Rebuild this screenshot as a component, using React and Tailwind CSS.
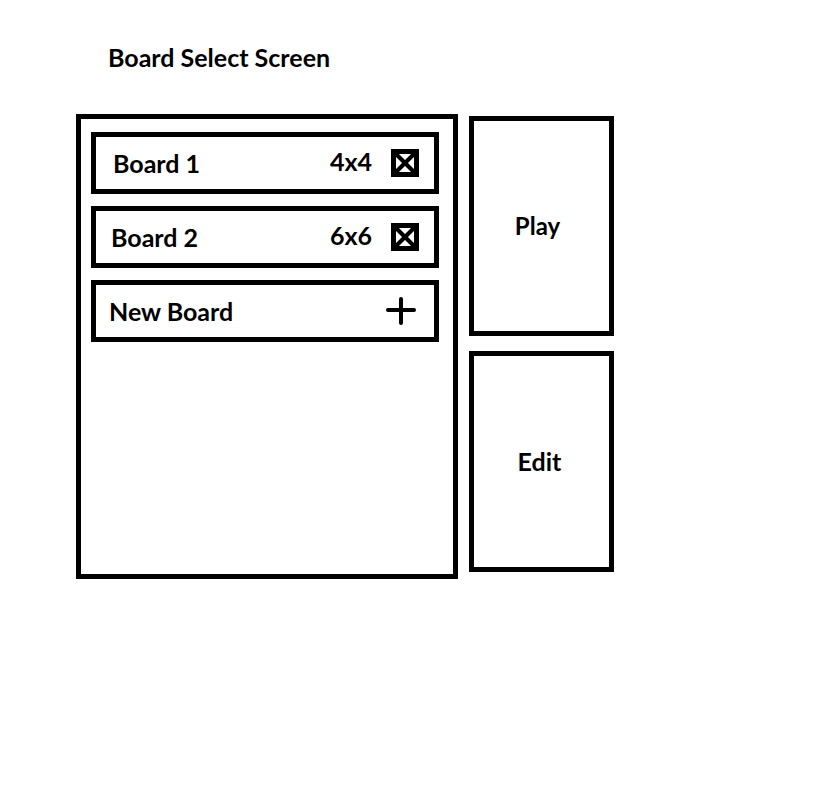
import React from 'react';

const CloseBox = () => (
  <svg width="28" height="28" viewBox="0 0 28 28" className="block shrink-0">
    <rect x="2.5" y="2.5" width="23" height="23" fill="white" stroke="black" strokeWidth="5" />
    <line x1="5" y1="5" x2="23" y2="23" stroke="black" strokeWidth="4" />
    <line x1="23" y1="5" x2="5" y2="23" stroke="black" strokeWidth="4" />
  </svg>
);

const PlusIcon = () => (
  <svg width="30" height="28" viewBox="0 0 30 28" className="block shrink-0">
    <line x1="2" y1="13" x2="28" y2="13" stroke="black" strokeWidth="4" strokeLinecap="round" />
    <line x1="15" y1="2" x2="15" y2="26" stroke="black" strokeWidth="4" strokeLinecap="round" />
  </svg>
);

const boards = [
  { name: 'Board 1', size: '4x4', pad: 'pl-[17px]' },
  { name: 'Board 2', size: '6x6', pad: 'pl-[15px]' },
];

export default function App() {
  return (
    <div className="min-h-screen bg-white text-black font-['Lato','Noto_Sans',sans-serif]">
      {/* Titre */}
      <div className="pl-[108px] pt-[45px] text-[25px] font-bold leading-none">Board Select Screen</div>

      <div className="mt-[44px] flex items-start gap-[11px] pl-[76px]">
        {/* Liste des plateaux */}
        <div className="flex h-[465px] w-[382px] flex-col gap-[12px] border-[5px] border-black pl-[10px] pt-[13px]">
          {boards.map((b) => (
            <div
              key={b.name}
              className={`flex h-[62px] w-[348px] items-center border-[5px] border-black pr-[15px] ${b.pad}`}
            >
              <span className="text-[25px] font-bold leading-none">{b.name}</span>
              <span className="ml-auto -mt-[3px] text-[25px] font-bold leading-none">{b.size}</span>
              <span className="ml-[19px]">
                <CloseBox />
              </span>
            </div>
          ))}
          <div className="flex h-[62px] w-[348px] items-center border-[5px] border-black pl-[13px] pr-[18px]">
            <span className="text-[25px] font-bold leading-none">New Board</span>
            <span className="ml-auto">
              <PlusIcon />
            </span>
          </div>
        </div>

        {/* Actions */}
        <div className="mt-[2px] flex w-[145px] flex-col gap-[15px]">
          <button className="flex h-[220px] items-center justify-center border-[5px] border-black bg-white pr-[8px] text-[24px] font-bold leading-none">
            Play
          </button>
          <button className="flex h-[221px] items-center justify-center border-[5px] border-black bg-white pr-[4px] text-[25px] font-bold leading-none">
            Edit
          </button>
        </div>
      </div>
    </div>
  );
}
